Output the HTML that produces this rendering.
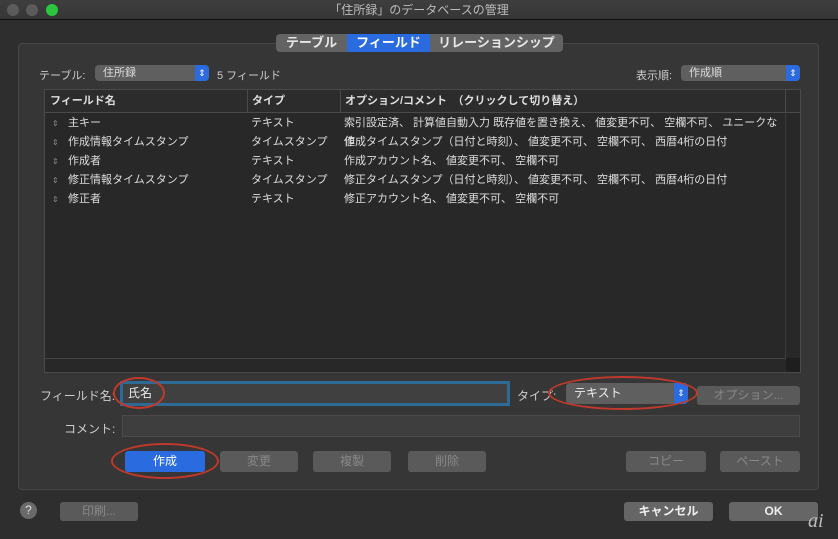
<!DOCTYPE html><html><head><meta charset="utf-8"><style>
*{margin:0;padding:0;box-sizing:border-box}
body{width:838px;height:539px;background:#2e2e2e;font-family:"Liberation Sans","Noto Sans CJK JP",sans-serif;color:#ddd;position:relative;overflow:hidden;font-size:11px}
.a{position:absolute}
.title{left:0;top:0;width:838px;height:20px;background:linear-gradient(#3e3e3e,#363636);border-bottom:1px solid #111;text-align:center;line-height:20px;font-size:12px;color:#bbb}
.dot{top:4px;width:12px;height:12px;border-radius:50%;background:#5b5b5b}
.panel{left:18px;top:43px;width:801px;height:447px;background:#363636;border:1px solid #474747;border-radius:4px}
.tabs{left:276px;top:34px;height:18px;display:flex;border-radius:4px;overflow:hidden;font-size:13px;font-weight:bold}
.tabs div{background:#636363;color:#e6e6e6;line-height:18px;text-align:center}
.pop{background:#5f5f5f;border-radius:4px;color:#ddd;padding-left:8px;line-height:16px}
.pop i{position:absolute;right:0;top:0;width:14px;height:100%;background:#2a6be0;border-radius:0 4px 4px 0;font-style:normal;font-size:9px;text-align:center;color:#fff}
.list{left:44px;top:89px;width:757px;height:284px;background:#282828;border:1px solid #4a4a4a}
.hdr{left:0;top:0;width:755px;height:23px;background:#2c2c2c;border-bottom:1px solid #4a4a4a;font-weight:bold;line-height:23px}
.row{height:19px;line-height:19px;position:absolute;left:0;width:740px}
.row span{position:absolute}
.row .m{font-size:8px;color:#888;left:7px}
.btn{background:#5a5a5a;border-radius:3px;color:#888;text-align:center;line-height:20px;font-size:12px}
.ell{border:2px solid #c0392b;border-radius:50%}
</style></head><body>
<div class="a title">「住所録」のデータベースの管理</div>
<div class="a dot" style="left:7px"></div><div class="a dot" style="left:26px"></div><div class="a dot" style="left:46px;background:#2bc63f"></div>
<div class="a panel"></div>
<div class="a tabs"><div style="width:71px">テーブル</div><div style="width:83px;background:#2a6be0;color:#fff">フィールド</div><div style="width:133px">リレーションシップ</div></div>
<div class="a" style="left:39px;top:67px;color:#ccc">テーブル:</div>
<div class="a pop" style="left:95px;top:65px;width:114px;height:16px">住所録<i>⇕</i></div>
<div class="a" style="left:217px;top:67px;color:#ccc">5 フィールド</div>
<div class="a" style="left:636px;top:67px;color:#ccc">表示順:</div>
<div class="a pop" style="left:681px;top:65px;width:119px;height:16px">作成順<i>⇕</i></div>
<div class="a list">
<div class="a hdr"><span class="a" style="left:5px">フィールド名</span><span class="a" style="left:202px;border-left:1px solid #4a4a4a;padding-left:4px">タイプ</span><span class="a" style="left:295px;border-left:1px solid #4a4a4a;padding-left:4px">オプション/コメント　（クリックして切り替え）</span><span class="a" style="left:740px;width:1px;height:22px;background:#4a4a4a"></span></div>
<div class="a" style="left:740px;top:23px;width:1px;height:247px;background:#3a3a3a"></div>
<div class="a" style="left:0;top:268px;width:740px;height:1px;background:#444"></div>
<div class="a" style="left:741px;top:268px;width:14px;height:14px;background:#1e1e1e"></div>
<div class="row" style="top:24px"><span class="m">⇕</span><span style="left:23px">主キー</span><span style="left:206px">テキスト</span><span style="left:299px">索引設定済、 計算値自動入力 既存値を置き換え、 値変更不可、 空欄不可、 ユニークな値</span></div>
<div class="row" style="top:43px"><span class="m">⇕</span><span style="left:23px">作成情報タイムスタンプ</span><span style="left:206px">タイムスタンプ</span><span style="left:299px">作成タイムスタンプ（日付と時刻）、 値変更不可、 空欄不可、 西暦4桁の日付</span></div>
<div class="row" style="top:62px"><span class="m">⇕</span><span style="left:23px">作成者</span><span style="left:206px">テキスト</span><span style="left:299px">作成アカウント名、 値変更不可、 空欄不可</span></div>
<div class="row" style="top:81px"><span class="m">⇕</span><span style="left:23px">修正情報タイムスタンプ</span><span style="left:206px">タイムスタンプ</span><span style="left:299px">修正タイムスタンプ（日付と時刻）、 値変更不可、 空欄不可、 西暦4桁の日付</span></div>
<div class="row" style="top:100px"><span class="m">⇕</span><span style="left:23px">修正者</span><span style="left:206px">テキスト</span><span style="left:299px">修正アカウント名、 値変更不可、 空欄不可</span></div>
</div>
<div class="a" style="left:40px;top:387px;font-size:12px;color:#ccc">フィールド名:</div>
<div class="a" style="left:120px;top:381px;width:390px;height:25px;background:#404040;border:3px solid #2e6a96;font-size:12px;line-height:19px;padding-left:5px;color:#eee">氏名</div>
<div class="a" style="left:517px;top:387px;font-size:12px;color:#ccc">タイプ:</div>
<div class="a pop" style="left:566px;top:383px;width:122px;height:21px;line-height:21px;font-size:12px;color:#eee">テキスト<i>⇕</i></div>
<div class="a btn" style="left:697px;top:386px;width:103px;height:19px;line-height:19px">オプション...</div>
<div class="a" style="left:64px;top:420px;font-size:12px;color:#ccc">コメント:</div>
<div class="a" style="left:122px;top:415px;width:678px;height:22px;background:#3e3e3e;border:1px solid #4a4a4a"></div>
<div class="a btn" style="left:125px;top:451px;width:80px;height:21px;background:#2a6be0;color:#fff">作成</div>
<div class="a btn" style="left:220px;top:451px;width:78px;height:21px">変更</div>
<div class="a btn" style="left:313px;top:451px;width:78px;height:21px">複製</div>
<div class="a btn" style="left:408px;top:451px;width:78px;height:21px">削除</div>
<div class="a btn" style="left:626px;top:451px;width:80px;height:21px">コピー</div>
<div class="a btn" style="left:720px;top:451px;width:80px;height:21px">ペースト</div>
<div class="a" style="left:20px;top:502px;width:17px;height:17px;border-radius:50%;background:#6a6a6a;color:#ddd;text-align:center;line-height:17px;font-size:12px">?</div>
<div class="a btn" style="left:60px;top:502px;width:78px;height:19px;line-height:19px">印刷...</div>
<div class="a btn" style="left:624px;top:502px;width:89px;height:19px;line-height:19px;background:#666;color:#eee;font-weight:bold">キャンセル</div>
<div class="a btn" style="left:729px;top:502px;width:89px;height:19px;line-height:19px;background:#666;color:#eee;font-weight:bold">OK</div>
<div class="a ell" style="left:113px;top:377px;width:52px;height:32px"></div>
<div class="a ell" style="left:548px;top:376px;width:150px;height:34px"></div>
<div class="a ell" style="left:111px;top:443px;width:108px;height:36px"></div>
<div class="a" style="left:808px;top:510px;font-size:20px;font-style:italic;color:#bbb;font-family:'Liberation Serif',serif">ai</div>
</body></html>
